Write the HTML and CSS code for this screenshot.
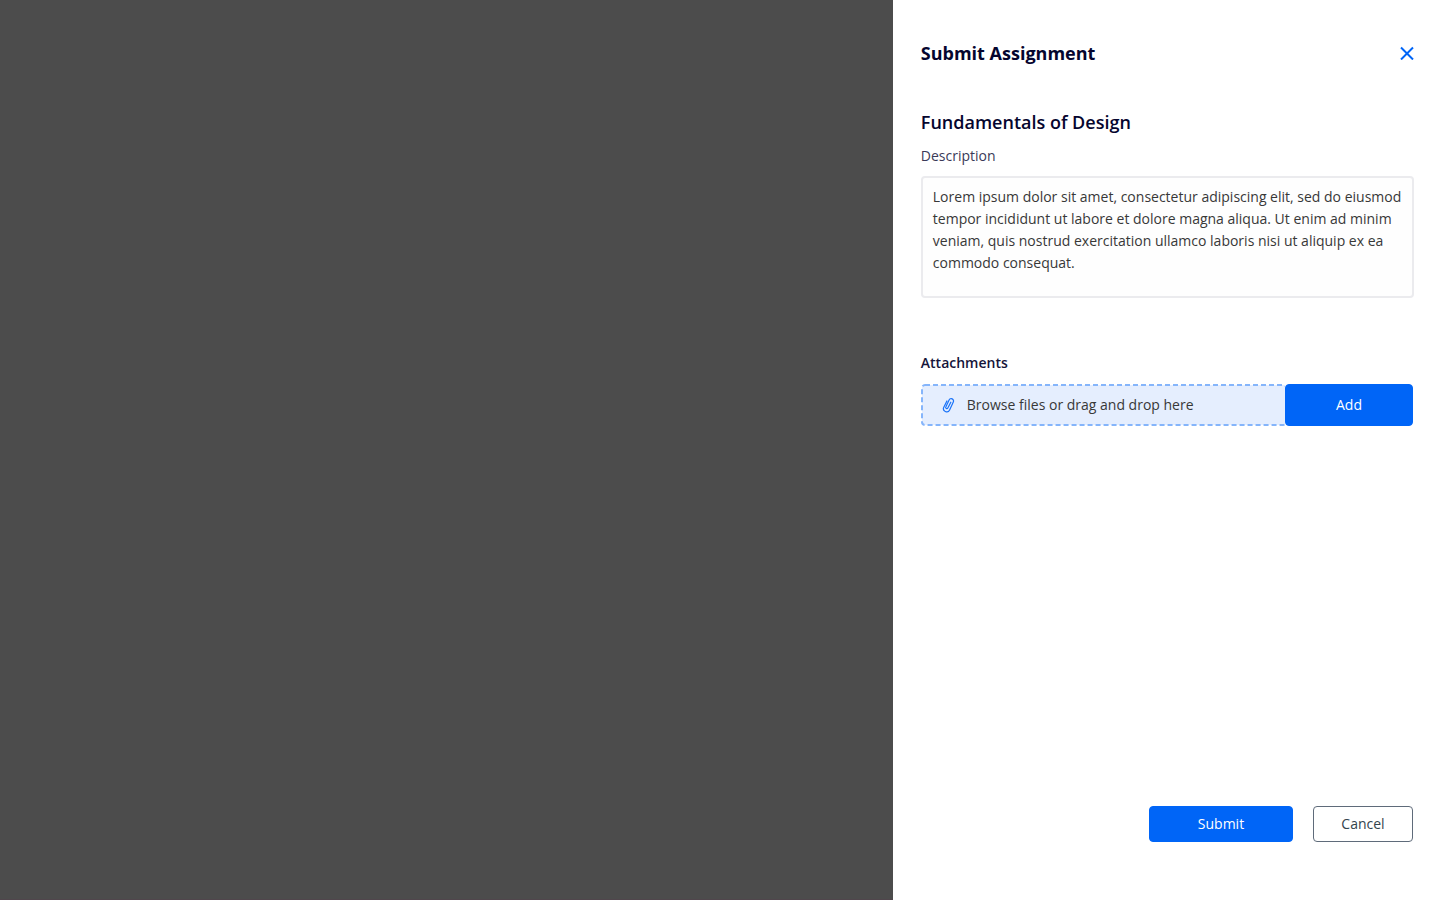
FILE: index.html
```html
<!DOCTYPE html>
<html lang="en">
<head>
<meta charset="utf-8">
<meta name="viewport" content="width=device-width, initial-scale=1">
<title>Submit Assignment</title>
<link rel="stylesheet" href="styles.css">
</head>
<body>
<div class="overlay">
  <form class="drawer" role="dialog" aria-labelledby="drawer-title">
    <header class="drawer-header">
      <h1 class="drawer-title" id="drawer-title">Submit Assignment</h1>
      <button class="close" type="button" aria-label="Close">
        <svg width="14" height="14" viewBox="0 0 14 14" aria-hidden="true"><path d="M1 1.5l12 12M13 1.5l-12 12" fill="none" stroke="currentColor" stroke-width="2"/></svg>
      </button>
    </header>
    <h2 class="course">Fundamentals of Design</h2>
    <label class="label" for="description">Description</label>
    <textarea class="description" id="description">Lorem ipsum dolor sit amet, consectetur adipiscing elit, sed do eiusmod tempor incididunt ut labore et dolore magna aliqua. Ut enim ad minim veniam, quis nostrud exercitation ullamco laboris nisi ut aliquip ex ea commodo consequat.</textarea>
    <h3 class="attachments-title">Attachments</h3>
    <div class="attach">
      <div class="dropzone">
        <svg class="dropzone-outline" aria-hidden="true"><rect class="dropzone-rect" x="1" y="1" rx="3"/></svg>
        <svg class="clip" width="14" height="16" viewBox="0 0 14 16" aria-hidden="true"><path d="M9.8 5.2L6.8 11a1.1 1.1 0 0 1-2-1L8.1 3a2.3 2.3 0 0 1 4.2 2L8.6 13a3.2 3.2 0 0 1-5.8-2.8L5.9 4" fill="none" stroke="currentColor" stroke-width="1.2" stroke-linecap="round"/></svg>
        <span>Browse files or drag and drop here</span>
      </div>
      <button class="button add" type="button">Add</button>
    </div>
    <footer class="actions">
      <button class="button submit" type="submit">Submit</button>
      <button class="button cancel" type="button">Cancel</button>
    </footer>
  </form>
</div>
</body>
</html>
```
FILE: styles.css
```css
* { box-sizing: border-box; }

body {
  margin: 0;
  font: 400 14px/22px "Open Sans", sans-serif;
  color: #383838;
}

.overlay {
  display: flex;
  justify-content: flex-end;
  min-height: 100vh;
  background: linear-gradient(#50464c, #50464c) bottom / 100% 1px no-repeat #4c4c4c;
}

.drawer {
  display: flex;
  flex-direction: column;
  width: 38%;
  min-width: 320px;
  padding: 40px 26px 58px 28px;
  background: #fff;
}

.drawer-header {
  display: flex;
  align-items: center;
  justify-content: space-between;
}

.drawer-title,
.course {
  margin: 0;
  font-size: 18px;
  line-height: 26px;
  color: #05052e;
}

.drawer-title { font-weight: 700; }

.course {
  margin-top: 43px;
  font-weight: 600;
}

.close {
  display: flex;
  padding: 0;
  border: 0;
  background: none;
  color: #0065f7;
  cursor: pointer;
}

.label {
  margin-top: 10px;
  color: #3a3a58;
}

.description {
  width: 100%;
  height: 122px;
  margin-top: 9px;
  padding: 8px 10px;
  border: 2px solid #ebebee;
  border-radius: 4px;
  background: #fefefe;
  font: inherit;
  color: inherit;
  resize: none;
}

.attachments-title {
  margin: 54px 0 0;
  font-size: 14px;
  font-weight: 600;
  color: #15153a;
}

.attach {
  display: flex;
  margin-top: 10px;
  padding-right: 1px;
  isolation: isolate;
}

.dropzone {
  position: relative;
  display: flex;
  flex: 1;
  align-items: center;
  gap: 12px;
  padding: 0 20px;
}

.dropzone-outline {
  position: absolute;
  inset: 0;
  z-index: -1;
  width: 100%;
  height: 100%;
}

.dropzone-rect {
  width: 100%;
  height: calc(100% - 2px);
  fill: #e5eefe;
  stroke: #85b5fb;
  stroke-width: 2px;
  stroke-dasharray: 5 3;
}

.clip { color: #1a73f8; }

.button {
  padding: 0;
  border: 1px solid #0065f7;
  border-radius: 4px;
  background: #0065f7;
  color: #fff;
  font: 400 14px/20px "Open Sans", sans-serif;
  cursor: pointer;
}

.add {
  width: 128px;
  height: 42px;
}

.actions {
  display: flex;
  justify-content: flex-end;
  gap: 20px;
  margin-top: auto;
  padding-right: 1px;
}

.submit {
  width: 144px;
  height: 36px;
}

.cancel {
  width: 100px;
  height: 36px;
  border-color: #5f6b7a;
  background: #fff;
  color: #33444d;
}
```
